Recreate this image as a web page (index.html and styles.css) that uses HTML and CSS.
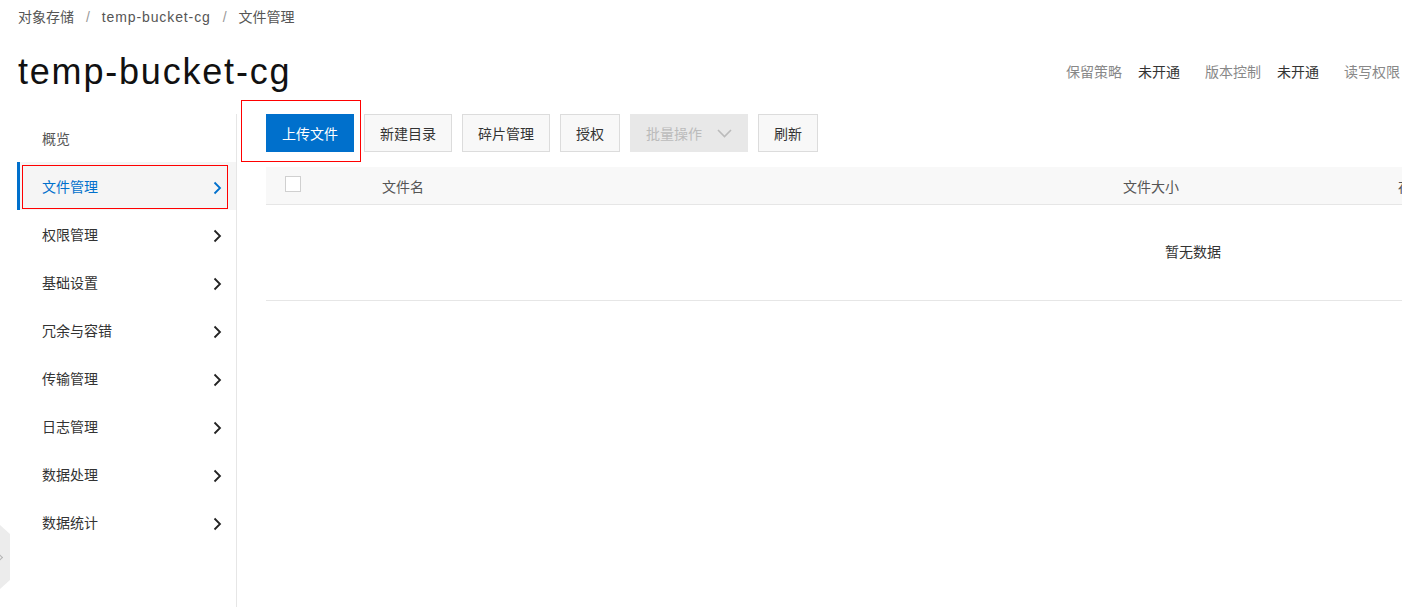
FILE: index.html
```html
<!DOCTYPE html>
<html lang="zh-CN">
  <head>
    <meta charset="UTF-8" />
    <meta name="viewport" content="width=device-width, initial-scale=1.0" />
    <title>文件管理 - temp-bucket-cg</title>
    <link rel="stylesheet" href="styles.css">
  </head>
  <body>
    <div class="page">
      <div class="crumbs">
        <span>对象存储</span>
        <span class="sep">/</span>
        <span class="latin">temp-bucket-cg</span>
        <span class="sep">/</span>
        <span>文件管理</span>
      </div>

      <div class="head">
        <h1 class="title">temp-bucket-cg</h1>
        <div class="meta">
          <span class="meta-label">保留策略</span>
          <span class="meta-value">未开通</span>
          <span class="meta-label">版本控制</span>
          <span class="meta-value">未开通</span>
          <span class="meta-label">读写权限</span>
        </div>
      </div>

      <div class="main">
        <aside class="side">
          <ul class="nav">
            <li class="nav-item plain">概览</li>
            <li class="nav-item active marked">文件管理
              <svg class="arrow" viewBox="0 0 9 14"><path d="M1.5 1.5 L7 7 L1.5 12.5" /></svg>
            </li>
            <li class="nav-item">权限管理
              <svg class="arrow" viewBox="0 0 9 14"><path d="M1.5 1.5 L7 7 L1.5 12.5" /></svg>
            </li>
            <li class="nav-item">基础设置
              <svg class="arrow" viewBox="0 0 9 14"><path d="M1.5 1.5 L7 7 L1.5 12.5" /></svg>
            </li>
            <li class="nav-item">冗余与容错
              <svg class="arrow" viewBox="0 0 9 14"><path d="M1.5 1.5 L7 7 L1.5 12.5" /></svg>
            </li>
            <li class="nav-item">传输管理
              <svg class="arrow" viewBox="0 0 9 14"><path d="M1.5 1.5 L7 7 L1.5 12.5" /></svg>
            </li>
            <li class="nav-item">日志管理
              <svg class="arrow" viewBox="0 0 9 14"><path d="M1.5 1.5 L7 7 L1.5 12.5" /></svg>
            </li>
            <li class="nav-item">数据处理
              <svg class="arrow" viewBox="0 0 9 14"><path d="M1.5 1.5 L7 7 L1.5 12.5" /></svg>
            </li>
            <li class="nav-item">数据统计
              <svg class="arrow" viewBox="0 0 9 14"><path d="M1.5 1.5 L7 7 L1.5 12.5" /></svg>
            </li>
          </ul>
        </aside>

        <section class="content">
          <div class="toolbar">
            <span class="mark-wrap">
              <button class="btn primary">上传文件</button>
            </span>
            <button class="btn">新建目录</button>
            <button class="btn">碎片管理</button>
            <button class="btn">授权</button>
            <button class="btn disabled">批量操作
              <svg class="caret" viewBox="0 0 15 9"><path d="M1 1 L7.5 7.5 L14 1" /></svg>
            </button>
            <button class="btn">刷新</button>
          </div>

          <div class="grid-wrap">
            <div class="grid">
              <div class="grid-head">
                <div class="cell check"><span class="checkbox"></span></div>
                <div class="cell">文件名</div>
                <div class="cell">文件大小</div>
                <div class="cell">存储类型</div>
              </div>
              <div class="grid-empty">暂无数据</div>
            </div>
          </div>
        </section>
      </div>

      <div class="edge-tab"><span class="edge-arrow"></span></div>
    </div>
  </body>
</html>
```

FILE: styles.css
```css
html,
body {
  margin: 0;
  padding: 0;
  height: 100%;
  overflow: hidden;
}

body {
  font-family: "Liberation Sans", "Noto Sans CJK SC", sans-serif;
  font-size: 14px;
  color: #333;
  background-color: white;
}

.page {
  position: relative;
  display: flex;
  flex-direction: column;
  height: 100vh;
}

/* 面包屑 */
.crumbs {
  padding: 8px 18px 0;
  line-height: 18px;
  color: #555;
  white-space: nowrap;
}

.crumbs span {
  display: inline-block;
}

.crumbs .latin {
  letter-spacing: 0.9px;
}

.crumbs .sep {
  color: #999;
  margin: 0 8px;
}

/* 标题 */
.head {
  display: flex;
  justify-content: space-between;
  align-items: center;
  height: 64px;
  margin-top: 14px;
  padding: 0 2px 0 18px;
  white-space: nowrap;
}

.title {
  margin: 0;
  font-size: 36px;
  font-weight: normal;
  line-height: 1;
  letter-spacing: 1.8px;
  color: #111;
}

.meta {
  display: flex;
  align-items: center;
  line-height: 20px;
}

.meta-label {
  color: #888;
  margin-right: 16px;
}

.meta-label:last-child {
  margin-right: 0;
}

.meta-value {
  color: #333;
  margin-right: 25px;
}

/* 主体 */
.main {
  flex: 1;
  display: flex;
  margin-top: 10px;
  min-height: 0;
}

.side {
  width: 236px;
  flex-shrink: 0;
  border-right: 1px solid #e6e6e6;
}

.nav {
  list-style: none;
  margin: 0;
  padding: 0 0 0 17px;
}

.nav-item {
  position: relative;
  display: flex;
  align-items: center;
  justify-content: space-between;
  height: 48px;
  padding: 0 14px 0 22px;
  border-left: 3px solid transparent;
  color: #333;
  cursor: pointer;
}

.nav-item.plain {
  color: #555;
}

.nav-item.active {
  border-left-color: #0070cc;
  background-color: #f5f5f5;
  color: #0070cc;
}

.arrow {
  width: 9px;
  height: 14px;
  margin-top: 4px;
  fill: none;
  stroke: #222;
  stroke-width: 1.8;
}

.nav-item.active .arrow {
  stroke: #0070cc;
}

.nav-item.marked::after {
  content: "";
  position: absolute;
  left: 2px;
  top: 3px;
  right: 8px;
  bottom: 1px;
  border: 1px solid #f00;
}

.content {
  flex: 1;
  min-width: 0;
  padding-left: 29px;
}

/* 工具栏 */
.toolbar {
  display: flex;
  gap: 10px;
  margin-bottom: 15px;
}

.mark-wrap {
  position: relative;
  display: flex;
}

.mark-wrap::after {
  content: "";
  position: absolute;
  left: -25px;
  top: -14px;
  right: -7px;
  bottom: -10px;
  border: 1px solid #f00;
  pointer-events: none;
}

.btn {
  display: flex;
  align-items: center;
  height: 38px;
  padding: 0 15px;
  border: 1px solid #dcdcdc;
  background-color: #f8f8f8;
  color: #333;
  font-family: inherit;
  font-size: 14px;
  cursor: pointer;
  white-space: nowrap;
}

.btn.primary {
  background-color: #0070cc;
  border-color: #0070cc;
  color: white;
}

.btn.disabled {
  background-color: #e8e8e8;
  border-color: #e8e8e8;
  color: #bbb;
  cursor: not-allowed;
}

.caret {
  width: 15px;
  height: 9px;
  margin-left: 15px;
  fill: none;
  stroke: #bbb;
  stroke-width: 1.6;
}

/* 表格 */
.grid-wrap {
  overflow: hidden;
}

.grid {
  width: 1854px;
}

.grid-head {
  display: grid;
  grid-template-columns: 96px 741px 275px 1fr;
  height: 37px;
  align-items: center;
  background-color: #f8f8f8;
  border-bottom: 1px solid #e6e6e6;
  color: #555;
}

.cell {
  padding-left: 20px;
  white-space: nowrap;
}

.cell.check {
  padding-left: 19px;
  display: flex;
}

.checkbox {
  width: 14px;
  height: 14px;
  margin-top: -3px;
  border: 1px solid #d0d0d0;
  background-color: white;
}

.grid-empty {
  height: 95px;
  line-height: 95px;
  text-align: center;
  color: #333;
  border-bottom: 1px solid #e6e6e6;
}

/* 左侧收起把手 */
.edge-tab {
  position: absolute;
  left: 0;
  top: 525px;
  width: 10px;
  height: 64px;
  background-color: #ececec;
  clip-path: polygon(0 0, 100% 14%, 100% 86%, 0 100%);
}

.edge-arrow {
  position: absolute;
  left: -3px;
  top: 30px;
  width: 4px;
  height: 4px;
  border-top: 1.5px solid #b5b5b5;
  border-right: 1.5px solid #b5b5b5;
  transform: rotate(45deg);
}
```
